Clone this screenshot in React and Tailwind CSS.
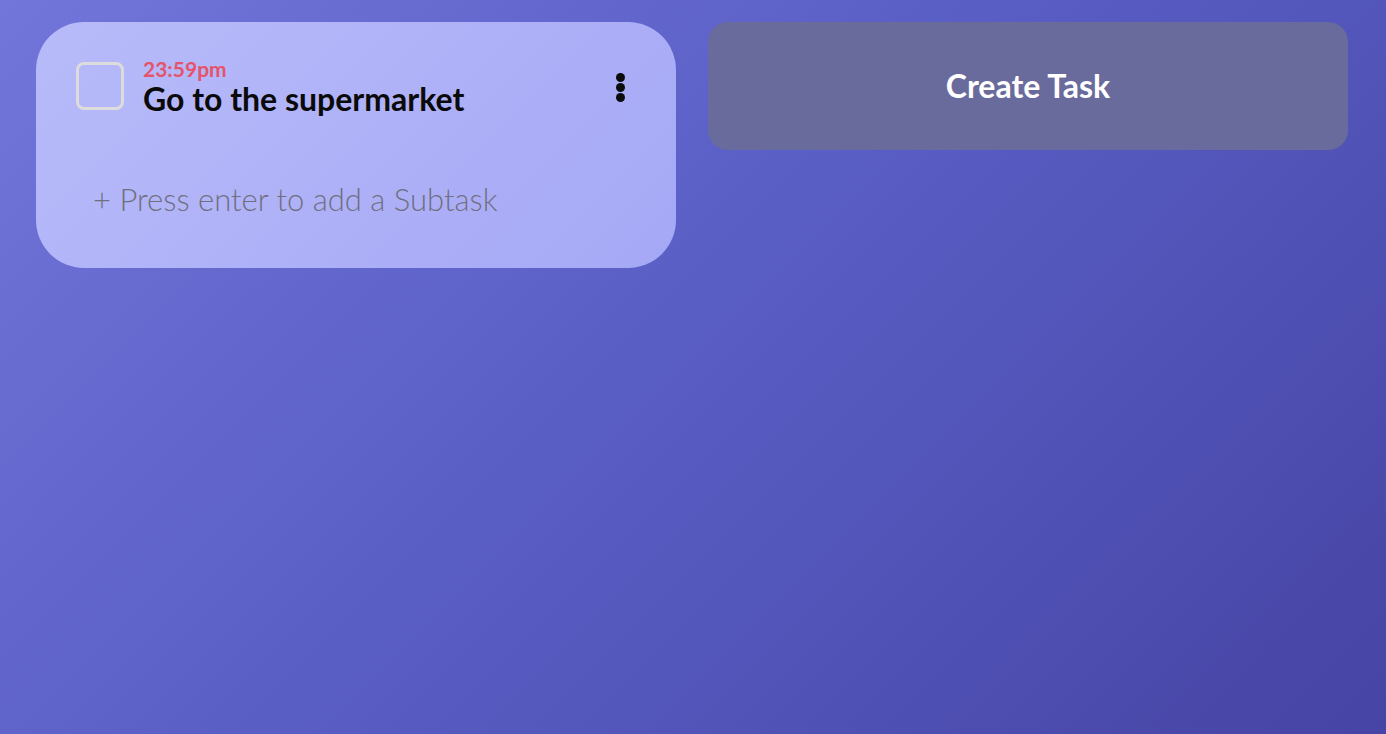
import React from "react";

export default function App() {
  return (
    <div
      className="w-[1386px] h-[734px] bg-[linear-gradient(135deg,#7275d9_0%,#5a5fc6_45%,#4644a4_100%)] pl-9 pr-[38px] pt-[22px]"
      style={{ fontFamily: "Lato, 'Open Sans', sans-serif" }}
    >
      <div className="flex gap-8 items-start">
        <div className="w-[640px] h-[246px] rounded-[48px] bg-[linear-gradient(135deg,#b8bbf9,#a5a8f5)] pl-10 pr-[51px] pt-10">
          <div className="flex items-start">
            <div className="w-12 h-12 rounded-[8px] border-[3px] border-[#dcdcdc] shrink-0" />
            <div className="ml-[19px] flex-1 -mt-[5px]">
              <div className="text-[21px] font-bold text-[#e5546a] leading-[24px]">23:59pm</div>
              <div className="text-[32px] font-bold text-[#0a0a0a] leading-[36px]">Go to the supermarket</div>
            </div>
            <div className="flex flex-col items-center gap-[1px] mt-[11px]">
              <span className="w-[9px] h-[9px] rounded-full bg-[#0c0c0c]" />
              <span className="w-[9px] h-[9px] rounded-full bg-[#0c0c0c]" />
              <span className="w-[9px] h-[9px] rounded-full bg-[#0c0c0c]" />
            </div>
          </div>
          <div className="mt-[64px] ml-[17px] text-[31px] font-light text-[#6f6f80] leading-[36px]">
            + Press enter to add a Subtask
          </div>
        </div>
        <button className="w-[640px] h-[128px] rounded-[20px] bg-[#696b9c] text-white text-[32px] font-bold flex items-center justify-center">
          Create Task
        </button>
      </div>
    </div>
  );
}
